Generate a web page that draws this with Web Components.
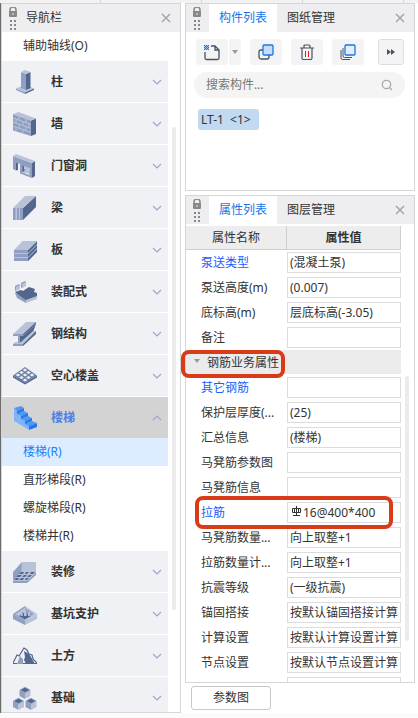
<!DOCTYPE html>
<html lang="zh-CN">
<head>
<meta charset="UTF-8">
<meta name="viewport" content="width=device-width, initial-scale=1">
<title>构件与属性</title>
<style>
    body {
        margin: 0;
        background: #fbfbfb;
        color: #333;
        font: 12px/18px "Noto Sans", "Noto Sans CJK SC", sans-serif;
    }
</style>
</head>
<body>
<app-workspace></app-workspace>

<script>
// Biểu tượng cho từng nhóm cấu kiện, khung 24x24
const L = '#b9c3d8', M = '#8f9fc1', D = '#53668d';
const cube = (x, y) => `
    <path fill="${M}" d="M${x} ${y + 3}v6l5.500 3v-6z"/>
    <path fill="${L}" d="M${x + 11} ${y + 3}v6l-5.500 3v-6z"/>
    <path fill="${D}" stroke="${M}" stroke-width=".8" d="M${x + .5} ${y + 3}l5-2.700 5 2.700-5 2.700z"/>`;

const NAV_ICONS = {
    column: `<path fill="${M}" d="M3 18.500v1.500l9 4v-2z"/><path fill="${D}" d="M21 18.500v1.500l-9 4v-2z"/>
        <path fill="${L}" d="M3 18.500l9-4 9 4-9 4z"/>
        <path fill="${M}" d="M8 2l5 2v16l-5-2z"/><path fill="${D}" d="M13 4l4.500-2v16L13 20z"/>
        <path fill="${L}" d="M8 2l4-2 5.500 2L13 4z"/>`,
    wall: `<path fill="${M}" d="M0 2l18 6.500V24L0 18.500z"/><path fill="${D}" d="M18 8.500l5-2V22l-5 2z"/>
        <path fill="${L}" d="M0 2l5.500-2L23 6.500l-5 2z"/>
        <path fill="none" stroke="${L}" stroke-width="1" d="M0 6l18 6.500M0 10l18 6.300M0 14.300l18 6M6 4.200v4M13 6.500V11M3 7v4M10 9.500v4M16 11.500v4M6 12v4.300M13 14.500v4M3 15.300v4M10 17.500v4"/>`,
    door: `<path fill="${D}" d="M3 8l2 1v7l-2 .500zM9 11h7v8l-7-1z"/>
        <path fill="${L}" d="M11 12h5v6h-2l-3-3z"/><path fill="${L}" d="M10 18l3-3 4 2v3z"/>
        <path fill="${M}" fill-rule="evenodd" d="M0 2l19 7v15L7 19.500V10L3 8.500v8L0 15zM9.500 11.500v7l7 2.500v-7z"/>
        <path fill="${D}" d="M19 9l3-2v15l-3 2z"/>
        <path fill="${L}" d="M0 2l3-2 19 7-3 2z"/>`,
    beam: `<path fill="${M}" d="M0 12h10v12H0z"/><path fill="${L}" d="M2.500 12H4v12H2.500zM6 12h1v12H6z"/>
        <path fill="${D}" d="M10 12L23 0v11L10 24z"/><path fill="${L}" d="M0 12L12 0h11L10 12z"/>`,
    slab: `<path fill="${L}" d="M1 12h14v11H1z"/>
        <path fill="${L}" d="M15 12l9-9v11l-9 9z"/>
        <path fill="${M}" d="M1 12h14v3H1zM1 16h14v3H1zM1 20h14v3H1z"/>
        <path fill="${D}" d="M15 12l9-9v3l-9 9zM15 16l9-9v3l-9 9zM15 20l9-9v3l-9 9z"/>
        <path fill="${L}" d="M1 12l8.500-9H24l-9 9z"/>`,
    precast: `<path fill="${M}" d="M2 6l4-2 1 1v3l-5 3zM8 3l4-2 1 1v3L8 8z"/>
        <path fill="${L}" d="M3 7l4-2v4l-4 2zM9 4l4-2v4L9 8z"/>
        <path fill="${M}" d="M2 13l11 6v4L4 18z"/><path fill="${L}" d="M13 19l11-4v4l-11 4z"/>
        <path fill="${D}" d="M2 12l6-2 2 1 6-4 6 2-1 3 3 1v3l-11 4L4 14z"/>`,
    steel: `<path fill="${D}" d="M5 14h5L23 2l-3 8L9 22H5z"/>
        <path fill="${L}" d="M0 12L13 0h10L10 12z"/><path fill="${D}" d="M10 12L23 0v2L10 14z"/>
        <path fill="${M}" d="M0 12h10v2H0z"/><path fill="${L}" d="M8 20L20 9h3L10 22H0l2-2z"/>
        <path fill="${M}" d="M5 14h2v7H5zM0 22h10v2H0z"/><path fill="${D}" d="M10 22L23 9v3L10 24z"/>`,
    hollow: `<path fill="${D}" d="M0 11.500v2l12 7 12-7v-2l-12 7z"/><path fill="#7182a8" d="M0 11.500L12 3l12 8.500-12 8z"/>
        <path fill="#f0f1f5" d="M12 4.500l2.300 1.500L12 7.500 9.700 6zM8.500 7l2.300 1.500L8.500 10 6.200 8.500zM15.500 7l2.300 1.500-2.300 1.500-2.300-1.500zM5 9.500L7.300 11 5 12.500 2.700 11zM12 9.500l2.300 1.500-2.300 1.500L9.700 11zM19 9.500l2.300 1.500-2.300 1.500-2.300-1.500zM8.500 12l2.300 1.500L8.500 15l-2.300-1.500zM15.500 12l2.300 1.500-2.300 1.500-2.300-1.500zM12 14.500l2.300 1.500-2.300 1.500L9.700 16z"/>`,
    stairs: `<path fill="#7fb5f8" d="M1 2v13l15 9v-4l-4-5-4-5-4-5z"/>
        <path fill="#4c9af6" d="M1 2l7-2 3 2-7 3zM4 8l7-3 4 2-7 3zM8 13l7-3 4 2-7 3zM12 18l7-3 5 2-8 3z"/>
        <path fill="#2877ea" d="M4 5l7-3v3L4 8zM8 10l7-3v3l-7 3zM12 15l7-3v3l-7 3zM16 20l8-3v4l-8 3z"/>`,
    decor: `<path fill="${M}" d="M0 12l9-10v10L0 21z"/><path fill="${L}" d="M9 2h14v11H8z"/>
        <path fill="${L}" d="M0 21l8-9h15l-9 9z"/><path fill="${M}" d="M0 21h14l9-9v3l-9 8H0z"/>
        <path fill="${D}" d="M8 12h3l-1 2H6zM13 12h3l-2 2h-2zM18 12h4l-2 2h-3zM5 15h4l-2 2H3zM11 15h3l-2 2H9zM16 15h3l-2 2h-3zM3 18h3l-1 2H1zM8 18h3l-1 2H6zM13 18h3l-2 2h-2z"/>`,
    pit: `<path fill="${M}" d="M0 12l12 7v4L0 17z"/><path fill="${L}" d="M24 12l-12 7v4l12-6z"/>
        <path fill="${M}" d="M0 12l12-8v2L3 12l9 5.500V19z"/><path fill="${L}" d="M24 12L12 4v2l9 6-9 5.500V19z"/>
        <path fill="${L}" d="M3 12l9-6v4l-6 4z"/><path fill="${M}" d="M21 12l-9-6v4l6 4z"/>
        <path fill="${D}" d="M6 14l6-4 6 4-6 3.500z"/>
        <path fill="${L}" d="M8 10h2v4H8zM11 8h3v6h-3zM15 10h2v4h-2z"/>
        <path fill="${M}" d="M9 10h1v4H9zM13 8h1v6h-1z"/>`,
    earth: `<path fill="none" stroke="${D}" stroke-width="1.200" d="M0 19l4-8 2 1 5-8 3 2 2 4 3 1 1 4 4 4"/>
        <path fill="${M}" d="M4 20l3-8 3 3v5z"/><path fill="${D}" d="M11 7l5 3 2 3 4 7H13l-2-4 1-3z"/>
        <path fill="none" stroke="${D}" d="M0 19.500h4M10 19.500h14"/>`,
    base: cube(6.500, 1) + cube(0, 12) + cube(12.500, 12)
};

// Khung panel: thanh tiêu đề có khóa, tay nắm, tab và nút đóng
class DockPanel extends HTMLElement {
    constructor() {
        super();
        this.attachShadow({mode: 'open'});
    }

    connectedCallback() {
        const tabs = (this.getAttribute('tabs') || '').split(',').filter(Boolean);
        const title = this.getAttribute('heading');
        this.shadowRoot.innerHTML = `
            <style>
                :host {
                    display: flex;
                    flex-direction: column;
                    box-sizing: border-box;
                    min-height: 0;
                    border: 1px solid #d6d6d8;
                    background: #fff;
                    position: relative;
                }
                header {
                    display: flex;
                    flex: none;
                    height: 28px;
                    background: #eeeef0;
                }
                .grip { flex: none; width: 23px; }
                .grip svg { display: block; margin: 3px 0 0 5px; }
                h2 { flex: 1; margin: 0; padding-left: 1px; font: inherit; line-height: 28px; }
                nav { flex: 1; display: flex; }
                button {
                    border: 0;
                    padding: 0 10px;
                    background: none;
                    color: inherit;
                    font: inherit;
                    line-height: 28px;
                }
                .tab.active { background: #fff; color: #1a73e8; }
                .close { padding: 0; width: 28px; }
                .close svg { display: block; margin: auto; }
                .body { flex: 1; min-height: 0; display: flex; flex-direction: column; overflow: hidden; }
            </style>
            <header>
                <span class="grip"><svg width="12" height="24" viewBox="0 0 12 24">
                    <path d="M3 5V3a3 3 0 0 1 6 0v2" fill="none" stroke="#888" stroke-width="1.500"/>
                    <rect x="2" y="4" width="8" height="6" rx="1" fill="#888"/><path d="M5.500 6h1v2h-1z" fill="#eee"/>
                    <path d="M3 13h2v2H3zM7 13h2v2H7zM3 17h2v2H3zM7 17h2v2H7zM3 21h2v2H3zM7 21h2v2H7z" fill="#888"/>
                </svg></span>
                ${title ? `<h2>${title}</h2>` : `<nav>${tabs.map((t, i) =>
                    `<button class="tab${i ? '' : ' active'}">${t}</button>`).join('')}</nav>`}
                <button class="close" aria-label="关闭"><svg width="10" height="10" viewBox="0 0 10 10">
                    <path d="M1 1l8 8M9 1L1 9" stroke="#a0a0a0" stroke-width="1.300"/></svg></button>
            </header>
            <div class="body"><slot></slot></div>
            <slot name="overlay"></slot>
        `;
    }
}
customElements.define('dock-panel', DockPanel);

class NavGroup extends HTMLElement {
    constructor() {
        super();
        this.attachShadow({mode: 'open'});
    }

    connectedCallback() {
        const open = this.hasAttribute('open');
        this.shadowRoot.innerHTML = `
            <style>
                :host { display: block; }
                :host([open]) { padding-bottom: 1px; }
                button {
                    display: flex;
                    align-items: center;
                    width: 100%;
                    height: 42px;
                    padding: 0 6px 0 11px;
                    border: 0;
                    border-bottom: 1px solid #fff;
                    background: #f0f1f5;
                    color: #333;
                    font: inherit;
                    font-weight: bold;
                    text-align: left;
                }
                :host([open]) button { background: #d3d3d3; color: #4f7fe0; border: 0; height: 41px; }
                .label { flex: 1; margin-left: 14px; }
            </style>
            <button aria-expanded="${open}">
                <svg width="24" height="24" viewBox="0 0 24 24">${NAV_ICONS[this.getAttribute('icon')]}</svg>
                <span class="label">${this.getAttribute('label')}</span>
                <svg width="10" height="6" viewBox="0 0 10 6">
                    <path d="${open ? 'M1 5l4-4 4 4' : 'M1 1l4 4 4-4'}" fill="none" stroke="#9ba9c8" stroke-width="1.200"/>
                </svg>
            </button>
            <slot></slot>
        `;
    }
}
customElements.define('nav-group', NavGroup);

class NavItem extends HTMLElement {
    constructor() {
        super();
        this.attachShadow({mode: 'open'});
        this.shadowRoot.innerHTML = `
            <style>
                :host { display: block; }
                a {
                    display: block;
                    padding-left: 21px;
                    line-height: 28px;
                    color: #333;
                    text-decoration: none;
                }
                :host([selected]) a { background: #deecff; color: #1681ff; }
            </style>
            <a href="#"><slot></slot></a>
        `;
    }
}
customElements.define('nav-item', NavItem);

// Vùng cuộn với thanh trượt mảnh bên phải
class ScrollArea extends HTMLElement {
    constructor() {
        super();
        this.attachShadow({mode: 'open'});
        this.shadowRoot.innerHTML = `
            <style>
                :host { flex: 1; min-height: 0; display: flex; }
                .content { flex: 1; min-width: 0; overflow: hidden; }
                .track {
                    flex: none;
                    display: grid;
                    grid-template-rows: var(--before, 14%) var(--thumb, 71%);
                    width: var(--track, 12px);
                }
                .thumb {
                    grid-row: 2;
                    width: 4px;
                    margin-left: 4px;
                    border-radius: 2px;
                    background: #ebebeb;
                }
            </style>
            <div class="content"><slot></slot></div>
            <div class="track"><div class="thumb"></div></div>
        `;
    }
}
customElements.define('scroll-area', ScrollArea);

class ComponentTools extends HTMLElement {
    constructor() {
        super();
        this.attachShadow({mode: 'open'});
        this.shadowRoot.innerHTML = `
            <style>
                :host { display: block; padding: 7px 9px 8px 8px; }
                .bar { display: flex; gap: 9px; padding-left: 2px; }
                button {
                    display: flex;
                    align-items: center;
                    justify-content: center;
                    width: 32px;
                    height: 26px;
                    padding: 0;
                    border: 0;
                    border-radius: 3px;
                    background: #f4f4f4;
                }
                .split { display: flex; gap: 1px; }
                .split button + button { width: 12px; }
                .more { width: 26px; margin-left: auto; margin-right: 1px; border: 1px solid #dedede; }
                .search {
                    display: flex;
                    align-items: center;
                    height: 26px;
                    margin: 7px 0 11px;
                    padding: 0 12px;
                    border-radius: 13px;
                    background: #f4f4f4;
                }
                input {
                    flex: 1;
                    min-width: 0;
                    padding: 0;
                    border: 0;
                    outline: 0;
                    background: none;
                    font: inherit;
                }
                input::placeholder { color: #777; opacity: 1; }
                .chip {
                    display: inline-block;
                    margin-left: 4px;
                    padding: 0 8px 0 3px;
                    border-radius: 3px;
                    background: #c2d9f2;
                    line-height: 21px;
                    white-space: pre;
                }
            </style>
            <div class="bar">
                <div class="split">
                    <button aria-label="新建"><svg width="18" height="18" viewBox="0 0 18 18">
                        <path d="M2 9v6q0 1.500 1.500 1.500h11q1.500 0 1.500-1.500V7l-4-4H8M12 3v4h4" fill="none" stroke="#4a5163" stroke-width="1.300"/>
                        <path d="M1 2h5v5H1z" fill="#1677e8" opacity=".4"/>
                        <path d="M1 2h1v1H1zM3 2h1v1H3zM5 2h1v1H5zM2 3h1v1H2zM4 3h1v1H4zM1 4h1v1H1zM3 4h1v1H3zM5 4h1v1H5zM2 5h1v1H2zM4 5h1v1H4zM1 6h1v1H1zM3 6h1v1H3zM5 6h1v1H5z" fill="#1677e8"/></svg></button>
                    <button aria-label="新建选项"><svg width="6" height="4" viewBox="0 0 6 4"><path d="M0 0h6L3 4z" fill="#999"/></svg></button>
                </div>
                <button aria-label="复制"><svg width="16" height="16" viewBox="0 0 16 16">
                    <rect x="1" y="6" width="10" height="9" rx="2" fill="none" stroke="#4a5163" stroke-width="1.300"/>
                    <rect x="5" y="1" width="10" height="10" rx="1" fill="#c8dcf5" stroke="#1677e8" stroke-width="1.300"/></svg></button>
                <button aria-label="删除"><svg width="16" height="16" viewBox="0 0 16 16">
                    <path d="M1 4h14M5 4V2q0-1 1-1h4q1 0 1 1v2M3 4v10q0 1.500 1.500 1.500h7q1.500 0 1.500-1.500V4" fill="none" stroke="#4a5163" stroke-width="1.200"/>
                    <path d="M6.500 7v6M9.500 7v6" stroke="#e02020"/></svg></button>
                <button aria-label="层间复制"><svg width="16" height="16" viewBox="0 0 16 16">
                    <path d="M1 6v8q0 1.500 1.500 1.500H10M3 4v8q0 1.500 1.500 1.500H12" fill="none" stroke="#4a5163"/>
                    <rect x="5" y="1" width="10" height="10" rx="1" fill="#e3efff" stroke="#1677e8" stroke-width="1.300"/></svg></button>
                <button class="more" aria-label="更多"><svg width="8" height="6" viewBox="0 0 8 6"><path d="M0 0l4 3-4 3zM4 0l4 3-4 3z" fill="#4a5163"/></svg></button>
            </div>
            <label class="search">
                <input type="text" placeholder="搜索构件..." aria-label="搜索构件">
                <svg width="12" height="12" viewBox="0 0 12 12"><circle cx="5.500" cy="5.500" r="4.200" fill="none" stroke="#aaa" stroke-width="1.300"/><path d="M8 8l3 3" stroke="#aaa" stroke-width="1.300"/></svg>
            </label>
            <span class="chip">LT-1  &lt;1&gt;</span>
        `;
    }
}
customElements.define('component-tools', ComponentTools);

// [tên, giá trị, kiểu]
const PROPS = [
    ['泵送类型', '(混凝土泵)', 'link'],
    ['泵送高度(m)', '(0.007)'],
    ['底标高(m)', '层底标高(-3.05)'],
    ['备注', ''],
    ['钢筋业务属性', null, 'group'],
    ['其它钢筋', '', 'link'],
    ['保护层厚度(...', '(25)'],
    ['汇总信息', '(楼梯)'],
    ['马凳筋参数图', ''],
    ['马凳筋信息', ''],
    ['拉筋', '16@400*400', 'link rebar'],
    ['马凳筋数量...', '向上取整+1'],
    ['拉筋数量计...', '向上取整+1'],
    ['抗震等级', '(一级抗震)'],
    ['锚固搭接', '按默认锚固搭接计算'],
    ['计算设置', '按默认计算设置计算'],
    ['节点设置', '按默认节点设置计算'],
    ['', '']
];

class PropertyTable extends HTMLElement {
    constructor() {
        super();
        this.attachShadow({mode: 'open'});
    }

    row([name, value, kind = ''], i) {
        if (kind === 'group') {
            return `<tr class="group"><td colspan="2"><svg width="6" height="4" viewBox="0 0 6 4"><path d="M0 0h6L3 4z" fill="#999"/></svg>${name}</td></tr>`;
        }
        const sign = kind.includes('rebar')
            ? `<svg width="11" height="13" viewBox="0 0 11 13"><path d="M4.500 0v10M.500 2.500h8v4h-8zM2.500 2.500v4M6.500 2.500v4M1 9.500h7" fill="none" stroke="#333"/></svg>` : '';
        return `<tr class="${kind}"><td><label for="p${i}">${name}</label></td>
            <td><span class="field">${sign}<input id="p${i}" type="text" value="${value}"></span></td></tr>`;
    }

    connectedCallback() {
        this.shadowRoot.innerHTML = `
            <style>
                :host { display: block; }
                table { width: 100%; table-layout: fixed; border-collapse: separate; border-spacing: 0; }
                col.name { width: 47%; }
                th {
                    box-sizing: border-box;
                    height: 24px;
                    padding: 0;
                    border-right: 1px solid #cfcfcf;
                    border-bottom: 1px solid #cfcfcf;
                    background: #ededed;
                    font-weight: bold;
                }
                th:first-child { font-weight: normal; }
                td { height: 25px; padding: 0; white-space: nowrap; }
                td:first-child { padding-left: 15px; }
                .link label { color: #1a5cff; }
                .group td { background: linear-gradient(#ebebeb 24px, #fff 24px); }
                .group td:first-child { padding-left: 8px; }
                .group svg { margin-right: 7px; vertical-align: 4px; }
                .field {
                    display: flex;
                    align-items: center;
                    box-sizing: border-box;
                    height: 21px;
                    padding-left: 2px;
                    border: 1px solid #dcdcdc;
                    background: #fff;
                }
                .field svg { flex: none; margin-left: 2px; }
                input {
                    flex: 1;
                    min-width: 0;
                    padding: 0;
                    border: 0;
                    outline: 0;
                    background: none;
                    color: #333;
                    font: inherit;
                }
            </style>
            <table>
                <colgroup><col class="name"><col></colgroup>
                <thead><tr><th>属性名称</th><th>属性值</th></tr></thead>
                <tbody>${PROPS.map((p, i) => this.row(p, i)).join('')}</tbody>
            </table>
        `;
    }
}
customElements.define('property-table', PropertyTable);

// Khung đỏ đánh dấu nằm đè lên bảng
class MarkBox extends HTMLElement {
    constructor() {
        super();
        this.attachShadow({mode: 'open'});
        this.shadowRoot.innerHTML = `
            <style>
                :host {
                    position: absolute;
                    box-sizing: border-box;
                    border: 4px solid #d93a17;
                    border-radius: 8px;
                    pointer-events: none;
                }
            </style>
        `;
    }
}
customElements.define('mark-box', MarkBox);

class AppWorkspace extends HTMLElement {
    constructor() {
        super();
        this.attachShadow({mode: 'open'});
        this.shadowRoot.innerHTML = `
            <style>
                :host { display: flex; flex-direction: column; height: 100vh; overflow: hidden; }
                .ruler {
                    flex: none;
                    height: 3px;
                    background: repeating-linear-gradient(90deg, #f2f2f2 0 100px, #d6d6d6 100px 101px);
                }
                main {
                    flex: 1;
                    min-height: 0;
                    display: grid;
                    grid-template-columns: 43fr 55fr;
                    gap: 4px;
                    margin-bottom: 5px;
                    padding-right: 3px;
                    border-left: 1px solid #6b6b6b;
                    background: #fff;
                }
                .side { display: flex; flex-direction: column; min-height: 0; }
                .first { padding-bottom: 1px; }
                .parts { flex: none; min-height: 188px; }
                .props { flex: 1; margin: 4px 0 3px; }
                .props scroll-area { --before: 33%; --thumb: 58%; --track: 13px; margin-top: 2px; }
                .title-mark { left: -5px; top: 154px; width: 104px; height: 28px; }
                .bar-mark { left: 9px; top: 300px; right: 21px; height: 33px; }
                .params {
                    align-self: flex-start;
                    width: 80px;
                    height: 24px;
                    margin: 0 0 3px 6px;
                    border: 1px solid #c8c8c8;
                    border-radius: 3px;
                    background: #fff;
                    color: #333;
                    font: inherit;
                }
            </style>
            <div class="ruler"></div>
            <main>
                <dock-panel heading="导航栏">
                    <scroll-area>
                        <nav-item class="first">辅助轴线(O)</nav-item>
                        <nav-group icon="column" label="柱"></nav-group>
                        <nav-group icon="wall" label="墙"></nav-group>
                        <nav-group icon="door" label="门窗洞"></nav-group>
                        <nav-group icon="beam" label="梁"></nav-group>
                        <nav-group icon="slab" label="板"></nav-group>
                        <nav-group icon="precast" label="装配式"></nav-group>
                        <nav-group icon="steel" label="钢结构"></nav-group>
                        <nav-group icon="hollow" label="空心楼盖"></nav-group>
                        <nav-group icon="stairs" label="楼梯" open>
                            <nav-item selected>楼梯(R)</nav-item>
                            <nav-item>直形梯段(R)</nav-item>
                            <nav-item>螺旋梯段(R)</nav-item>
                            <nav-item>楼梯井(R)</nav-item>
                        </nav-group>
                        <nav-group icon="decor" label="装修"></nav-group>
                        <nav-group icon="pit" label="基坑支护"></nav-group>
                        <nav-group icon="earth" label="土方"></nav-group>
                        <nav-group icon="base" label="基础"></nav-group>
                    </scroll-area>
                </dock-panel>
                <div class="side">
                    <dock-panel class="parts" tabs="构件列表,图纸管理">
                        <component-tools></component-tools>
                    </dock-panel>
                    <dock-panel class="props" tabs="属性列表,图层管理">
                        <scroll-area><property-table></property-table></scroll-area>
                        <mark-box slot="overlay" class="title-mark"></mark-box>
                        <mark-box slot="overlay" class="bar-mark"></mark-box>
                    </dock-panel>
                    <button class="params">参数图</button>
                </div>
            </main>
        `;
    }
}
customElements.define('app-workspace', AppWorkspace);
</script>
</body>
</html>
